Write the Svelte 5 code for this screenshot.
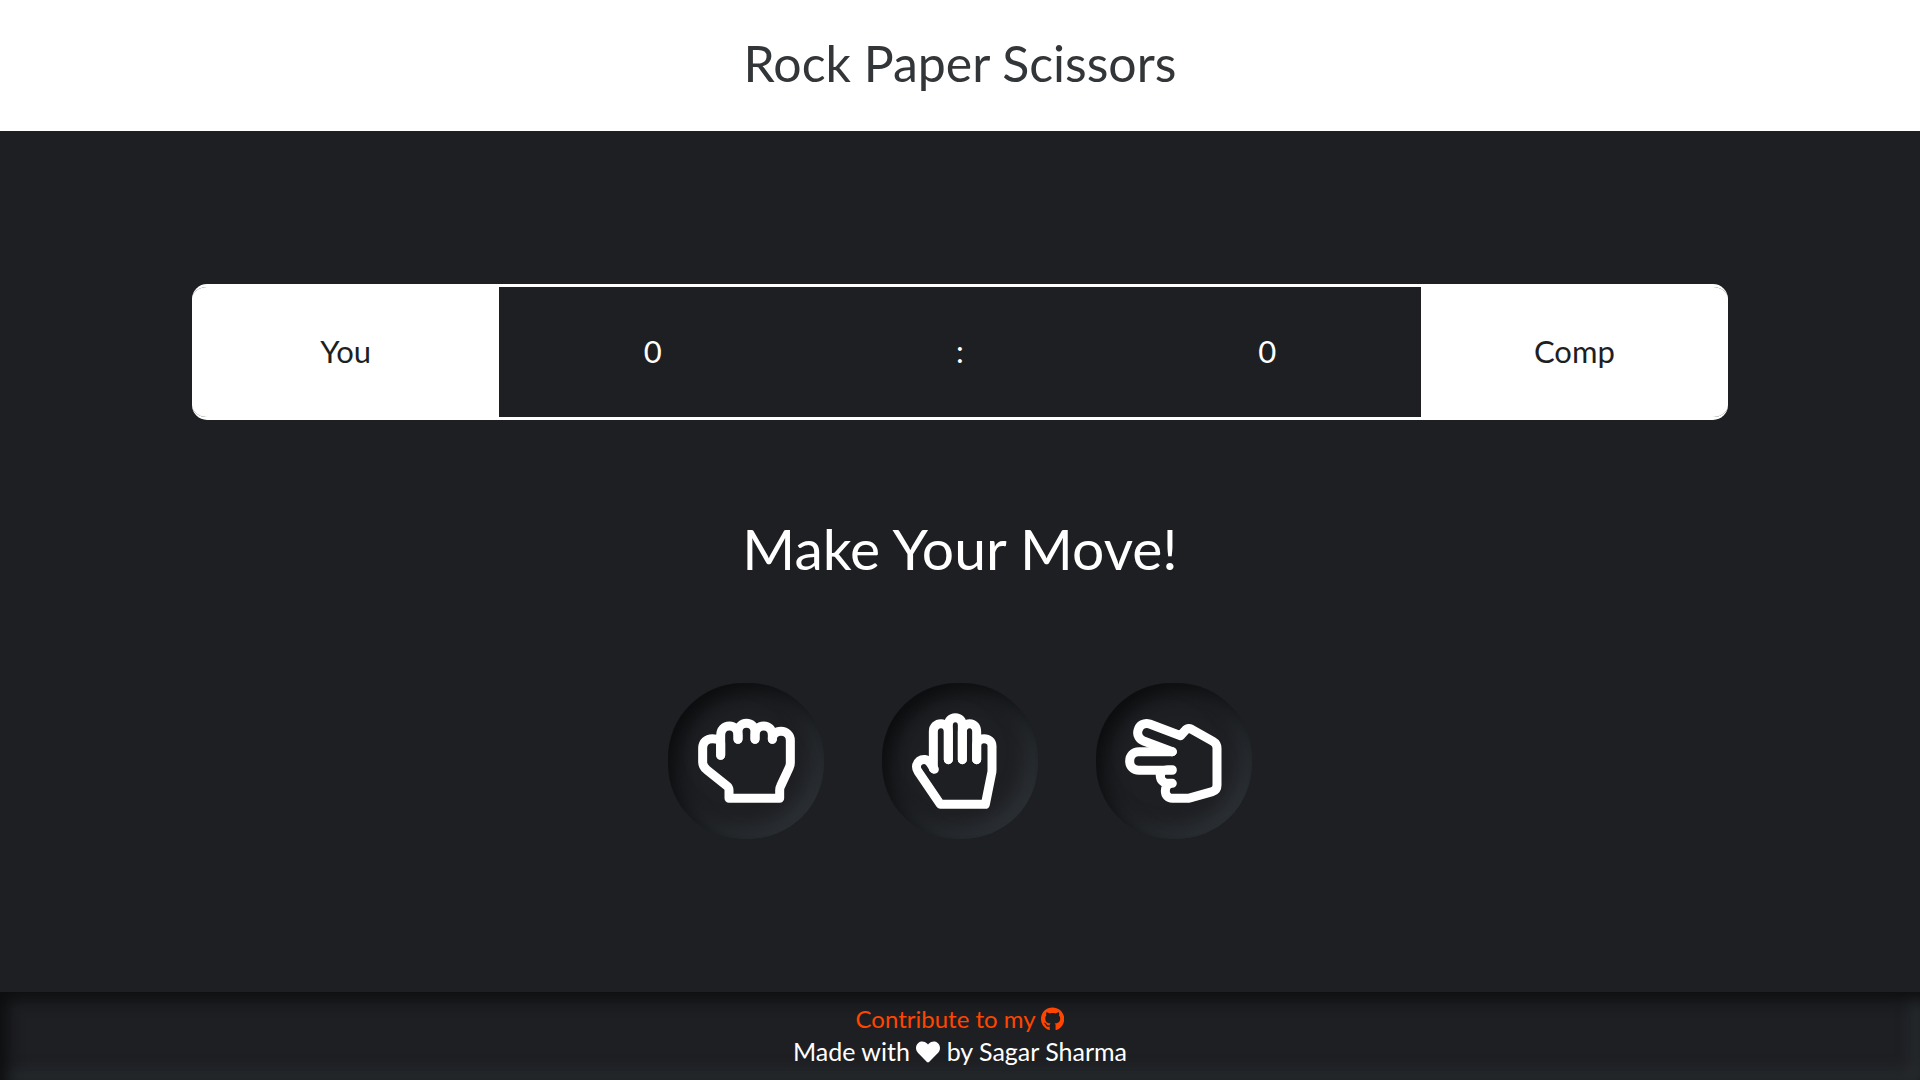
<script>
  const moves = ['rock', 'paper', 'scissors'];
  let you = $state(0);
  let comp = $state(0);
  let message = $state('Make Your Move!');

  function play(pick) {
    const other = Math.floor(Math.random() * 3);
    const diff = (pick - other + 3) % 3;
    if (diff === 1) {
      you += 1;
      message = 'You Win!';
    } else if (diff === 2) {
      comp += 1;
      message = 'You Lose!';
    } else {
      message = 'Draw!';
    }
  }
</script>

<div class="page">
  <header><h1>Rock Paper Scissors</h1></header>

  <main>
    <section class="board" aria-label="Score">
      <div class="name">You</div>
      <div>{you}</div>
      <div>:</div>
      <div>{comp}</div>
      <div class="name">Comp</div>
    </section>

    <h2>{message}</h2>

    <div class="moves">
      {#each moves as move, i}
        <button type="button" aria-label={move} onclick={() => play(i)}>
          {#if move === 'rock'}
            <svg viewBox="108 111 300 300" aria-hidden="true">
              <path d="M182 244V208C180 197 169 194 157 194C140 194 128 206 128 222V264C128 274 132 281 140 287L201 336Q207 341 207 348V373H359V348Q359 342 362 336L388 280Q391 274 391 266V199C391 184 379 172 363 172C348 172 337 182 337 196" />
              <path d="M182 244V184C182 168 193 156 208 156C223 156 234 168 234 184V196" />
              <path d="M234 196V174C234 159 245 148 259 148C274 148 285 159 285 174V196" />
              <path d="M285 196V183C285 167 296 156 311 156C326 156 337 167 337 183V196" />
            </svg>
          {:else if move === 'paper'}
            <svg viewBox="120 111 300 300" aria-hidden="true">
              <path d="M193 286L179 265C171 255 158 254 148 261C138 269 137 282 144 292L211 391H346L364 302Q366 296 366 288V216C366 203 355 194 342 194C329 194 320 203 320 216V257" />
              <path d="M190 284V173C190 158 200 149 213 149C226 149 235 159 235 173V257" />
              <path d="M235 257V154C235 140 243 131 256 131C269 131 277 140 277 154V257" />
              <path d="M277 257V173C277 159 286 149 299 149C312 149 320 159 320 173V257" />
            </svg>
          {:else}
            <svg viewBox="117 111 300 300" aria-hidden="true">
              <path d="M262 233L178 202C163 196 155 184 159 169C163 153 178 145 194 150L287 185L299 171Q308 160 320 166L384 202Q396 209 396 222V334Q396 349 382 353L318 371Q311 373 304 373H262C249 373 241 364 241 351C241 339 249 328 262 328H250C236 328 226 319 226 306V290" />
              <path d="M262 233H162C145 233 134 245 134 261C134 277 145 289 162 289H262M262 287H248C237 287 226 293 226 306" />
            </svg>
          {/if}
        </button>
      {/each}
    </div>
  </main>

  <footer>
    <a href="#contribute">Contribute to my
      <svg viewBox="0 0 496 512" aria-hidden="true">
        <path d="M165.900 397.400c0 2-2.300 3.600-5.200 3.600-3.300.3-5.600-1.300-5.600-3.600 0-2 2.300-3.600 5.200-3.600 3-.3 5.600 1.300 5.600 3.600zm-31.100-4.500c-.7 2 1.300 4.300 4.300 4.900 2.600 1 5.600 0 6.200-2s-1.300-4.300-4.300-5.200c-2.600-.7-5.500.3-6.200 2.300zm44.200-1.700c-2.900.7-4.900 2.600-4.600 4.900.3 2 2.900 3.300 5.900 2.600 2.900-.7 4.900-2.600 4.600-4.600-.3-1.900-3-3.200-5.900-2.900zM244.800 8C106.100 8 0 113.300 0 252c0 110.900 69.800 205.800 169.500 239.200 12.800 2.300 17.300-5.600 17.300-12.100 0-6.200-.3-40.400-.3-61.400 0 0-70 15-84.700-29.800 0 0-11.400-29.100-27.800-36.600 0 0-22.900-15.700 1.600-15.400 0 0 24.900 2 38.600 25.800 21.900 38.600 58.600 27.500 72.900 20.900 2.300-16 8.800-27.100 16-33.700-55.900-6.200-112.300-14.300-112.300-110.500 0-27.500 7.600-41.300 23.600-58.900-2.600-6.500-11.100-33.300 2.600-67.900 20.900-6.500 69 27 69 27 20-5.600 41.500-8.500 62.800-8.500s42.800 2.900 62.800 8.500c0 0 48.100-33.600 69-27 13.700 34.700 5.200 61.400 2.600 67.900 16 17.700 25.800 31.500 25.800 58.900 0 96.500-58.900 104.200-114.800 110.500 9.200 7.900 17 22.900 17 46.400 0 33.700-.3 75.400-.3 83.600 0 6.500 4.600 14.400 17.300 12.100C428.200 457.800 496 362.900 496 252 496 113.300 383.500 8 244.800 8z" />
      </svg></a>
    <p>Made with
      <svg viewBox="0 0 512 512" role="img" aria-label="love">
        <path d="M462.300 62.600C407.500 15.900 326 24.300 275.700 76.200L256 96.500l-19.700-20.300C186.100 24.300 104.500 15.900 49.700 62.600c-62.800 53.600-66.100 149.800-9.900 207.900l193.500 199.800c12.500 12.900 32.800 12.900 45.300 0l193.500-199.800c56.300-58.100 53-154.300-9.800-207.900z" />
      </svg>
      by Sagar Sharma</p>
  </footer>
</div>

<style>
  :global(body) {
    margin: 0;
    background: #1e1f23;
  }
  .page {
    min-height: 100vh;
    display: flex;
    flex-direction: column;
    background: #1e1f23;
    color: #fff;
    font-family: Lato, 'Open Sans', sans-serif;
  }
  header {
    padding: 31px 16px 36px;
    background: #fff;
    color: #333638;
    text-align: center;
  }
  h1,
  h2,
  p {
    margin: 0;
    font-weight: 400;
  }
  h1 {
    font-size: 50px;
    line-height: 64px;
  }
  main {
    flex: 1;
    display: flex;
    flex-direction: column;
    align-items: center;
    justify-content: center;
    gap: 88px;
  }
  .board {
    box-sizing: border-box;
    width: 80%;
    display: grid;
    grid-template-columns: repeat(5, 1fr);
    border: solid #fff;
    border-width: 3px 0;
    border-radius: 15px;
    overflow: hidden;
    font-size: 31px;
    line-height: 40px;
    text-align: center;
  }
  .board div {
    padding: 44px 0 46px;
  }
  .board .name {
    background: #fff;
    color: #1e1f23;
  }
  h2 {
    padding-bottom: 7px;
    font-size: 57px;
    line-height: 80px;
    text-align: center;
  }
  .moves {
    display: flex;
    gap: 58px;
  }
  button {
    display: grid;
    place-items: center;
    width: 156px;
    height: 156px;
    padding: 0;
    border: 0;
    border-radius: 75px;
    background: #1e1f23;
    box-shadow:
      inset 8px 8px 20px #0a0b0c,
      inset -8px -8px 20px #30363a;
    cursor: pointer;
  }
  button svg {
    width: 100px;
    height: 100px;
    fill: none;
    stroke: #fff;
    stroke-width: 27;
    stroke-linecap: round;
    stroke-linejoin: round;
  }
  footer {
    padding: 11px 16px 13px;
    box-shadow:
      inset 7px 7px 16px #0c0d0e,
      inset -7px -7px 16px #2a2f32;
    font-size: 24px;
    line-height: 32px;
    text-align: center;
  }
  p {
    font-size: 25px;
  }
  a {
    display: block;
    color: #ff4500;
    text-decoration: none;
  }
  footer svg {
    height: 24px;
    fill: currentColor;
    vertical-align: -3px;
  }
</style>
